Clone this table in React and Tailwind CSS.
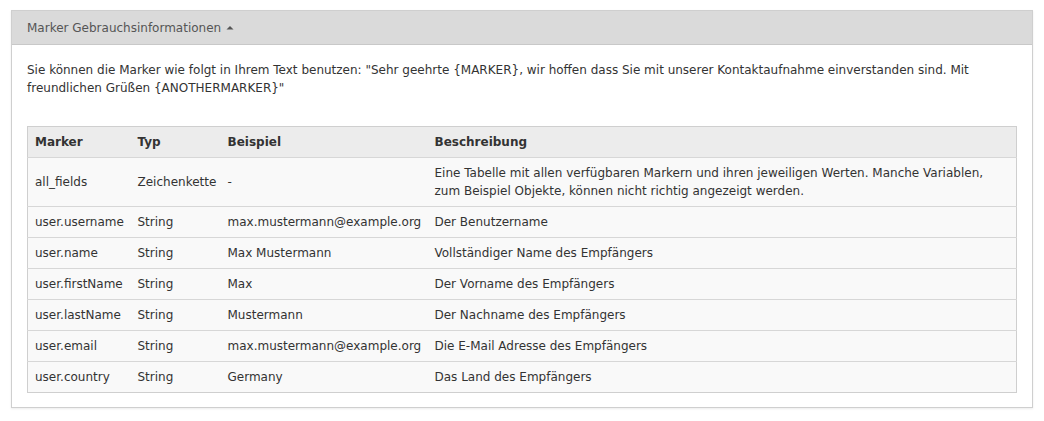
import React from 'react';

const rows = [
  ['all_fields', 'Zeichenkette', '-', 'Eine Tabelle mit allen verfügbaren Markern und ihren jeweiligen Werten. Manche Variablen, zum Beispiel Objekte, können nicht richtig angezeigt werden.'],
  ['user.username', 'String', 'max.mustermann@example.org', 'Der Benutzername'],
  ['user.name', 'String', 'Max Mustermann', 'Vollständiger Name des Empfängers'],
  ['user.firstName', 'String', 'Max', 'Der Vorname des Empfängers'],
  ['user.lastName', 'String', 'Mustermann', 'Der Nachname des Empfängers'],
  ['user.email', 'String', 'max.mustermann@example.org', 'Die E-Mail Adresse des Empfängers'],
  ['user.country', 'String', 'Germany', 'Das Land des Empfängers'],
];

export default function App() {
  return (
    <div className="bg-white w-[1044px] h-[421px] pt-[10px] px-[11px] text-[12px] text-[#333] font-['DejaVu_Sans',Verdana,sans-serif]">
      <div className="border border-[#cfcfcf] shadow-[0_1px_2px_rgba(0,0,0,0.08)] w-[1022px]">
        <div className="bg-[#dadada] border-b border-[#c8c8c8] h-[34px] flex items-center px-[15px] text-[#555]">
          Marker Gebrauchsinformationen
          <svg width="8" height="5" viewBox="0 0 8 5" className="ml-[5px]"><path d="M0.5 4.5 L4 1 L7.5 4.5 Z" fill="#555" /></svg>
        </div>
        <div className="px-[15px] pt-[16px] pb-[14px]">
          <p className="leading-[18px] mb-[29px]">
            Sie können die Marker wie folgt in Ihrem Text benutzen: "Sehr geehrte {'{MARKER}'}, wir hoffen dass Sie mit unserer Kontaktaufnahme einverstanden sind. Mit freundlichen Grüßen {'{ANOTHERMARKER}'}"
          </p>
          <table className="w-full table-fixed border border-[#cfcfcf] border-collapse">
            <colgroup>
              <col className="w-[103px]" />
              <col className="w-[90px]" />
              <col className="w-[207px]" />
              <col />
            </colgroup>
            <thead>
              <tr className="bg-[#ececec] h-[31px]">
                <th className="text-left font-bold px-[7px]">Marker</th>
                <th className="text-left font-bold px-[7px]">Typ</th>
                <th className="text-left font-bold px-[7px]">Beispiel</th>
                <th className="text-left font-bold px-[7px]">Beschreibung</th>
              </tr>
            </thead>
            <tbody>
              {rows.map((r) => (
                <tr key={r[0]} className="bg-[#f9f9f9] border-t border-[#d7d7d7]">
                  {r.map((c, i) => (
                    <td key={i} className={`pl-[7px] py-[6px] leading-[18px] align-middle ${i < 3 ? 'whitespace-nowrap pr-0' : 'pr-[7px]'}`}>{c}</td>
                  ))}
                </tr>
              ))}
            </tbody>
          </table>
        </div>
      </div>
    </div>
  );
}
